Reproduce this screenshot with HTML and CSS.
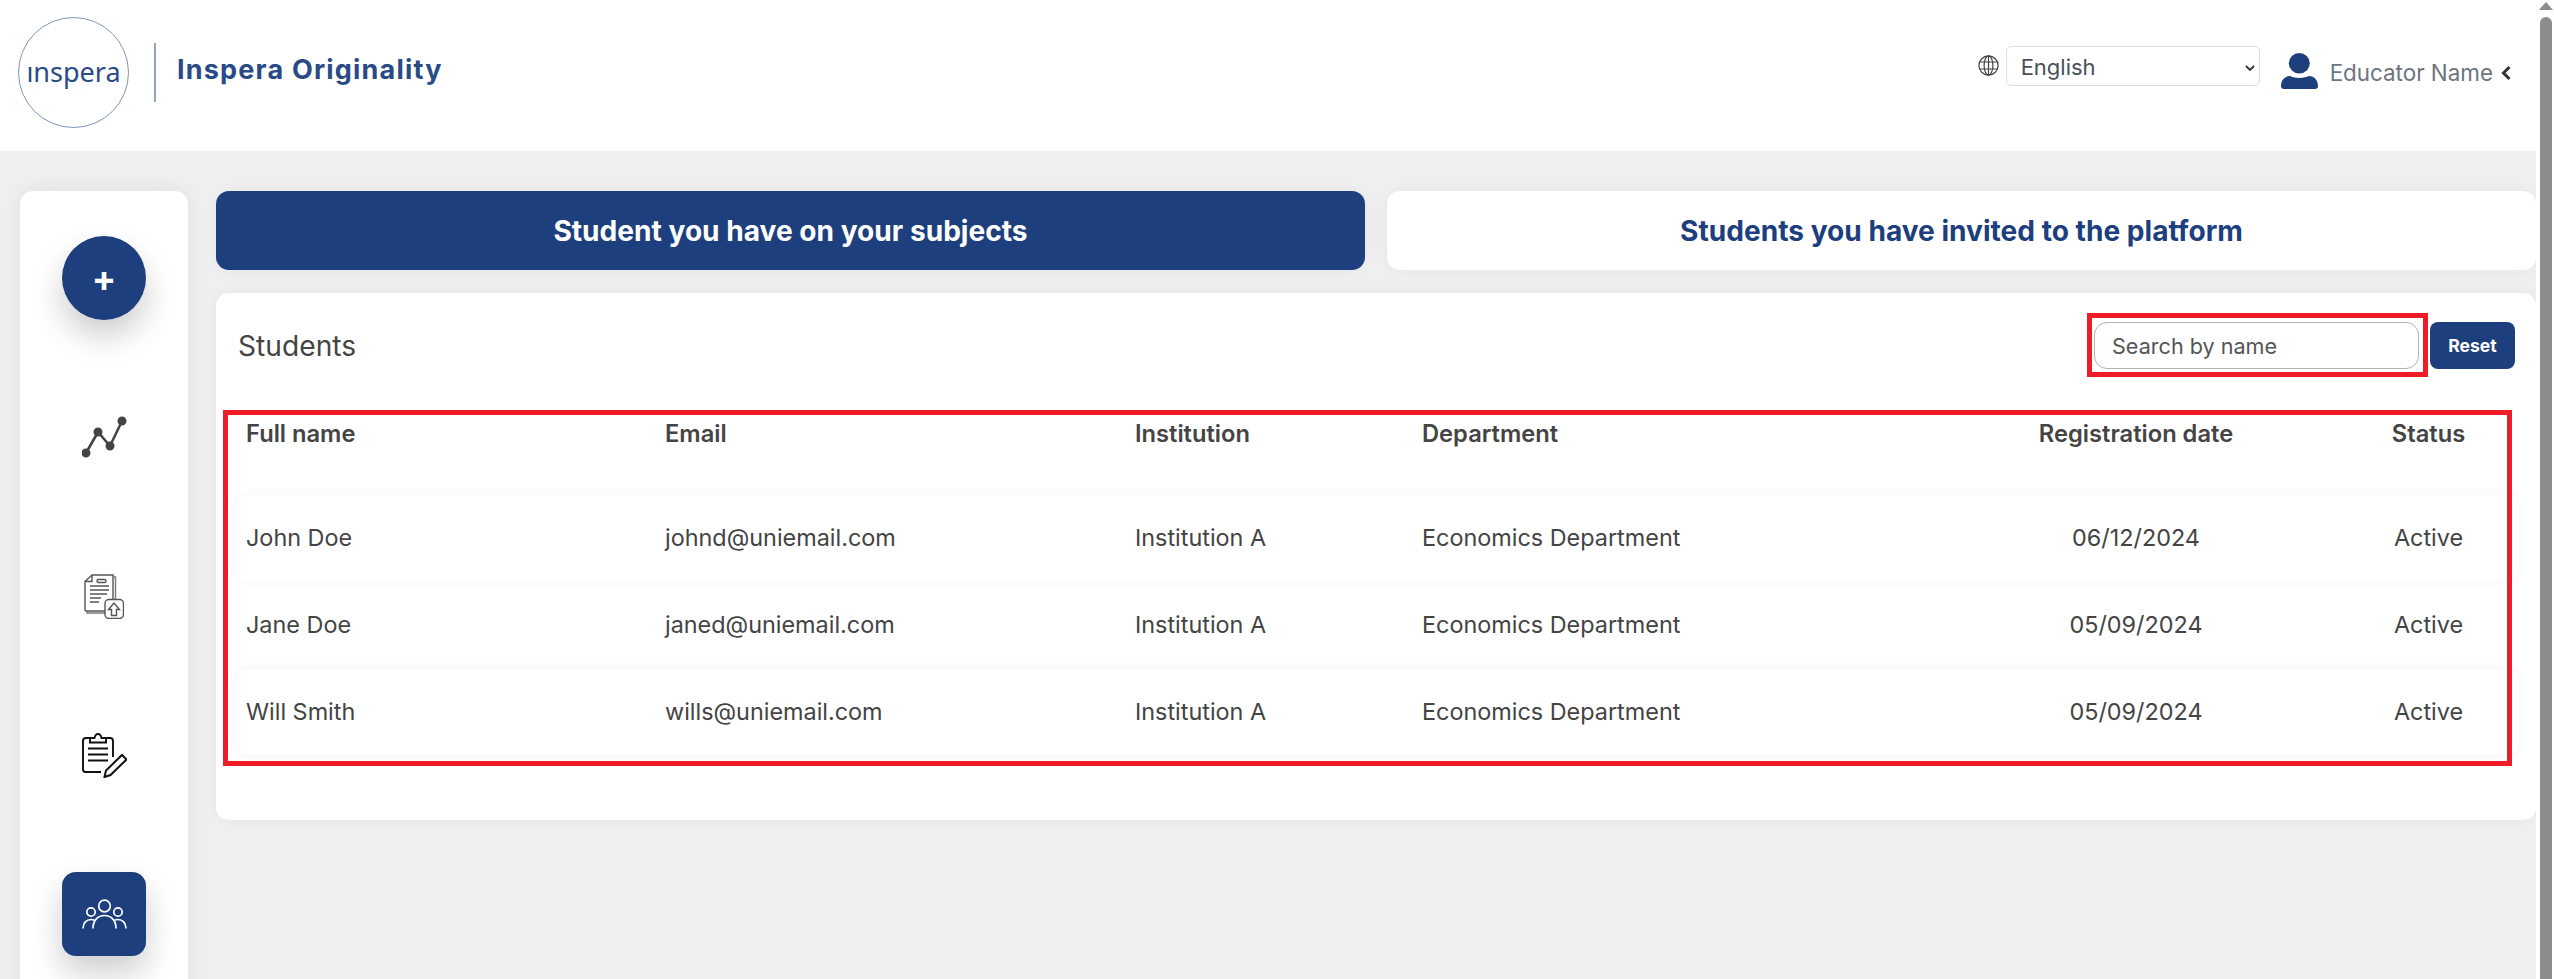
FILE: index.html
```html
<!DOCTYPE html>
<html lang="en">
<head>
<meta charset="utf-8">
<title>Inspera Originality</title>
<link rel="stylesheet" href="styles.css">
</head>
<body>
<div class="window">
  <div class="page">
    <header class="topbar">
      <div class="logo-circle"><span class="logo-word">ınspera</span></div>
      <div class="logo-divider"></div>
      <div class="brand">Inspera Originality</div>
      <div class="topbar-right">
        <svg class="globe" viewBox="0 0 21 21" fill="none" stroke="#444" stroke-width="1.2">
          <circle cx="10.5" cy="10.5" r="9.6"/>
          <ellipse cx="10.5" cy="10.5" rx="4.4" ry="9.6"/>
          <path d="M10.5 1v19M1.6 7h17.8M1.6 14h17.8"/>
        </svg>
        <div class="lang">
          <select class="lang-select"><option>English</option></select>
          <svg class="lang-chevron" viewBox="0 0 10 6" fill="none" stroke="#333" stroke-width="1.8"><path d="M1 1l4 4 4-4"/></svg>
        </div>
        <svg class="user-icon" viewBox="0 0 37 36" fill="#1d3f7e">
          <ellipse cx="18.3" cy="10.3" rx="10.5" ry="10.3"/>
          <path d="M0 33c0-6 4-10 9-10 2.500 1.200 5.500 1.900 9.500 1.900S25.500 24 28 23c5 0 9 4 9 10 0 2-1 3-3 3H3c-2 0-3-1-3-3z"/>
        </svg>
        <span class="user-name">Educator Name</span>
        <svg class="user-chevron" viewBox="0 0 10 14" fill="none" stroke="#333" stroke-width="3"><path d="M8.500 1L2.500 7l6 6"/></svg>
      </div>
    </header>

    <main class="main">
      <nav class="sidebar">
        <div class="nav-item nav-round"><span class="plus">+</span></div>
        <div class="nav-item">
          <svg class="nav-icon" viewBox="0 0 45 41" fill="#444" stroke="#444" stroke-width="2.6">
            <path fill="none" d="M4 36L16 15l12 14L40 4"/>
            <circle cx="4" cy="36" r="3.200"/><circle cx="16" cy="15" r="3.200"/><circle cx="28" cy="29" r="3.200"/><circle cx="40" cy="4" r="3.200"/>
          </svg>
        </div>
        <div class="nav-item">
          <svg class="nav-doc" viewBox="0 0 40 45" fill="none" stroke="#555" stroke-width="1.400">
            <path d="M29 30V1H8L1 7.500V36a1 1 0 0 0 1 1h19"/>
            <path d="M8 1v6.500H1"/>
            <path d="M29 3h2.500v22M3 37v2h18" stroke="#777"/>
            <rect x="13" y="5.500" width="9" height="3" rx="1.500"/>
            <path stroke-width="1.300" d="M6 12h19M6 16h19M6 20h17M6 24h11M6 28h9"/>
            <rect x="21" y="25.500" width="18.500" height="19" rx="4" fill="#fff"/>
            <path d="M30 29l-5.500 6.500h3v6h5v-6h3z"/>
          </svg>
        </div>
        <div class="nav-item">
          <svg class="nav-icon" viewBox="0 0 45 45" fill="none" stroke="#111" stroke-width="1.900">
            <path d="M19 39H3.500A2.500 2.500 0 0 1 1 36.500V8a3 3 0 0 1 3-3h4M24 5h4a3 3 0 0 1 3 3v16"/>
            <path d="M8 9.500V5h4.500C13 2.500 14.500 1 16 1s3 1.500 3.500 4H24v4.500z"/>
            <path d="M6 15.500h20M6 21.500h20M6 27.500h20"/>
            <path stroke-width="2" d="M22.500 44l1.500-6.500L40 22l4.500 4.500L28.500 42z"/>
          </svg>
        </div>
        <div class="nav-item nav-square">
          <svg class="nav-group" viewBox="0 0 45 30" fill="none" stroke="#fff" stroke-width="1.700">
            <circle cx="22.500" cy="7" r="5.800"/>
            <circle cx="9" cy="13" r="4.200"/>
            <circle cx="36" cy="13" r="4.200"/>
            <path d="M11 29.500C11 21 16 16.500 22.500 16.500S34 21 34 29.500"/>
            <path d="M1 29.500C1 24 4.500 20.500 9 20.500c1 0 2 .2 3.500.8"/>
            <path d="M44 29.500C44 24 40.500 20.500 36 20.500c-1 0-2 .2-3.500.8"/>
          </svg>
        </div>
      </nav>

      <div class="content">
        <div class="tabs">
          <div class="tab tab-active">Student you have on your subjects</div>
          <div class="tab">Students you have invited to the platform</div>
        </div>

        <section class="card">
          <div class="card-head">
            <h2 class="card-title">Students</h2>
            <input class="search" type="text" placeholder="Search by name">
            <button class="reset" type="button">Reset</button>
          </div>

          <div class="table">
            <div class="grid-row head-row">
              <div>Full name</div><div>Email</div><div>Institution</div><div>Department</div>
              <div class="center">Registration date</div><div class="center">Status</div>
            </div>
            <div class="grid-row body-row shaded">
              <div>John Doe</div><div>johnd@uniemail.com</div><div>Institution A</div><div>Economics Department</div>
              <div class="center">06/12/2024</div><div class="center">Active</div>
            </div>
            <div class="grid-row body-row">
              <div>Jane Doe</div><div>janed@uniemail.com</div><div>Institution A</div><div>Economics Department</div>
              <div class="center">05/09/2024</div><div class="center">Active</div>
            </div>
            <div class="grid-row body-row shaded">
              <div>Will Smith</div><div>wills@uniemail.com</div><div>Institution A</div><div>Economics Department</div>
              <div class="center">05/09/2024</div><div class="center">Active</div>
            </div>
          </div>

          <div class="mark mark-search"></div>
          <div class="mark mark-table"></div>
        </section>
      </div>
    </main>
  </div>

  <div class="scrollbar">
    <div class="scroll-arrow"></div>
    <div class="scroll-thumb"></div>
  </div>
</div>
</body>
</html>
```

FILE: styles.css
```css
* { box-sizing: border-box; }

html, body {
  margin: 0;
  height: 100%;
  overflow: hidden;
}

body {
  font-family: Inter, "Liberation Sans", sans-serif;
  font-size: 21.6px;
  color: #444;
  background: #fff;
}

.window {
  display: flex;
  height: 979px;
}

.page {
  flex: 1;
  min-width: 0;
  background: #f0f0f2;
  overflow: hidden;
}

/* top bar */
.topbar {
  display: flex;
  align-items: flex-start;
  height: 151px;
  padding: 17px 25px 0 18px;
  background: #fff;
}

.logo-circle {
  display: flex;
  align-items: center;
  justify-content: center;
  width: 111px;
  height: 111px;
  border: 1.5px solid #7f94b8;
  border-radius: 50%;
}

.logo-word {
  font-family: "Noto Sans", sans-serif;
  font-size: 27px;
  line-height: 1;
  color: #2a4a86;
  margin-top: -2px;
}

.logo-divider {
  width: 2px;
  height: 59px;
  margin: 26px 21px 0 25px;
  background: #93a2bf;
}

.brand {
  margin-top: 35px;
  font-size: 27px;
  line-height: 36px;
  font-weight: 700;
  color: #2a4a86;
  letter-spacing: 1.2px;
}

.topbar-right {
  display: flex;
  align-items: flex-start;
  margin-left: auto;
}

.globe {
  width: 21px;
  height: 21px;
  margin: 38px 7px 0 0;
}

.lang {
  position: relative;
  width: 254px;
  height: 40px;
  margin: 29px 21px 0 0;
}

.lang-select {
  appearance: none;
  width: 100%;
  height: 100%;
  padding: 2px 14px 0;
  border: 1px solid #dcdee1;
  border-radius: 5px;
  background: #fff;
  font: inherit;
  font-size: 22px;
  color: #495057;
}

.lang-chevron {
  position: absolute;
  right: 5px;
  top: 19px;
  width: 10px;
  height: 6px;
}

.user-icon {
  width: 37px;
  height: 36px;
  margin: 36px 12px 0 0;
}

.user-name {
  margin: 43px 8px 0 0;
  font-size: 22.4px;
  line-height: 26px;
  color: #6c757d;
}

.user-chevron {
  width: 10px;
  height: 14px;
  margin-top: 49px;
}

/* layout */
.main {
  display: flex;
  gap: 28px;
  padding: 40px 0 0 20px;
}

.sidebar {
  display: flex;
  flex-direction: column;
  align-items: center;
  gap: 75px;
  flex: none;
  width: 168px;
  height: 1000px;
  padding-top: 45px;
  background: #fff;
  border-radius: 13px;
  box-shadow: 0 0 24px rgba(0, 0, 0, 0.08);
}

.nav-item {
  display: flex;
  align-items: center;
  justify-content: center;
  flex: none;
  width: 84px;
  height: 84px;
}

.nav-round,
.nav-square {
  background: #1d3f7e;
  box-shadow: 0 16px 32px rgba(0, 0, 0, 0.2);
}

.nav-round { border-radius: 50%; }
.nav-square { border-radius: 14px; }

.plus {
  font-size: 36px;
  line-height: 1;
  font-weight: 700;
  color: #fff;
}

.nav-icon { width: 45px; height: 45px; }
.nav-doc { width: 40px; height: 45px; }
.nav-group { width: 45px; height: 30px; }

.content {
  flex: 1;
  min-width: 0;
}

.tabs {
  display: grid;
  grid-template-columns: 1fr 1fr;
  gap: 22px;
}

.tab {
  display: flex;
  align-items: center;
  justify-content: center;
  height: 79px;
  border-radius: 13px;
  background: #fff;
  box-shadow: 0 0 20px rgba(0, 0, 0, 0.05);
  font-size: 28.1px;
  font-weight: 700;
  color: #1d3f7e;
}

.tab-active {
  background: #1d3f7e;
  color: #fff;
}

/* card */
.card {
  position: relative;
  height: 527px;
  margin-top: 23px;
  padding-top: 29px;
  border-radius: 13px;
  background: #fff;
  box-shadow: 0 0 20px rgba(0, 0, 0, 0.05);
}

.card-head {
  display: flex;
  align-items: center;
  height: 47px;
  padding: 0 21px 0 22px;
}

.card-title {
  margin: 0 auto 0 0;
  font-size: 28.2px;
  font-weight: 400;
  color: #444;
}

.search {
  width: 325px;
  height: 47px;
  padding: 0 17px;
  border: 1px solid #b3b3b3;
  border-radius: 13px;
  background: #fff;
  font: inherit;
  color: #444;
}

.search::placeholder {
  color: #555;
  opacity: 1;
}

.reset {
  width: 85px;
  height: 47px;
  margin-left: 11px;
  border: 0;
  border-radius: 8px;
  background: #1d3f7e;
  font: inherit;
  font-size: 17.6px;
  font-weight: 700;
  color: #fff;
}

.table {
  margin: 46px 17px 0 19px;
  font-size: 23.4px;
}

.grid-row {
  display: grid;
  grid-template-columns: 419px 470px 287px 500px 428px 157px;
  align-items: center;
  padding: 0 10px 0 11px;
}

.head-row {
  height: 80px;
  align-items: start;
  line-height: 38px;
  font-size: 23.7px;
  font-weight: 600;
  color: #444;
}

.body-row {
  height: 86px;
  margin-bottom: 1px;
  padding-bottom: 2px;
  border-radius: 13px;
}

.shaded {
  box-shadow: 0 0 10px rgba(0, 0, 0, 0.05);
}

.center { text-align: center; }

/* red annotation frames drawn over the screenshot */
.mark {
  position: absolute;
  border: 5px solid #ee1c25;
  pointer-events: none;
}

.mark-search {
  left: 1871px;
  top: 20px;
  width: 341px;
  height: 64px;
}

.mark-table {
  left: 7px;
  top: 117px;
  width: 2289px;
  height: 356px;
}

/* scrollbar */
.scrollbar {
  flex: none;
  position: relative;
  width: 18px;
  background: #fff;
}

.scroll-arrow {
  position: absolute;
  left: 3px;
  top: 2px;
  width: 0;
  height: 0;
  border-left: 7px solid transparent;
  border-right: 7px solid transparent;
  border-bottom: 8px solid #8c8c8c;
}

.scroll-thumb {
  position: absolute;
  left: 4px;
  right: 2px;
  top: 17px;
  bottom: 0;
  border-radius: 6px 6px 0 0;
  background: #8c8c8c;
}
```
